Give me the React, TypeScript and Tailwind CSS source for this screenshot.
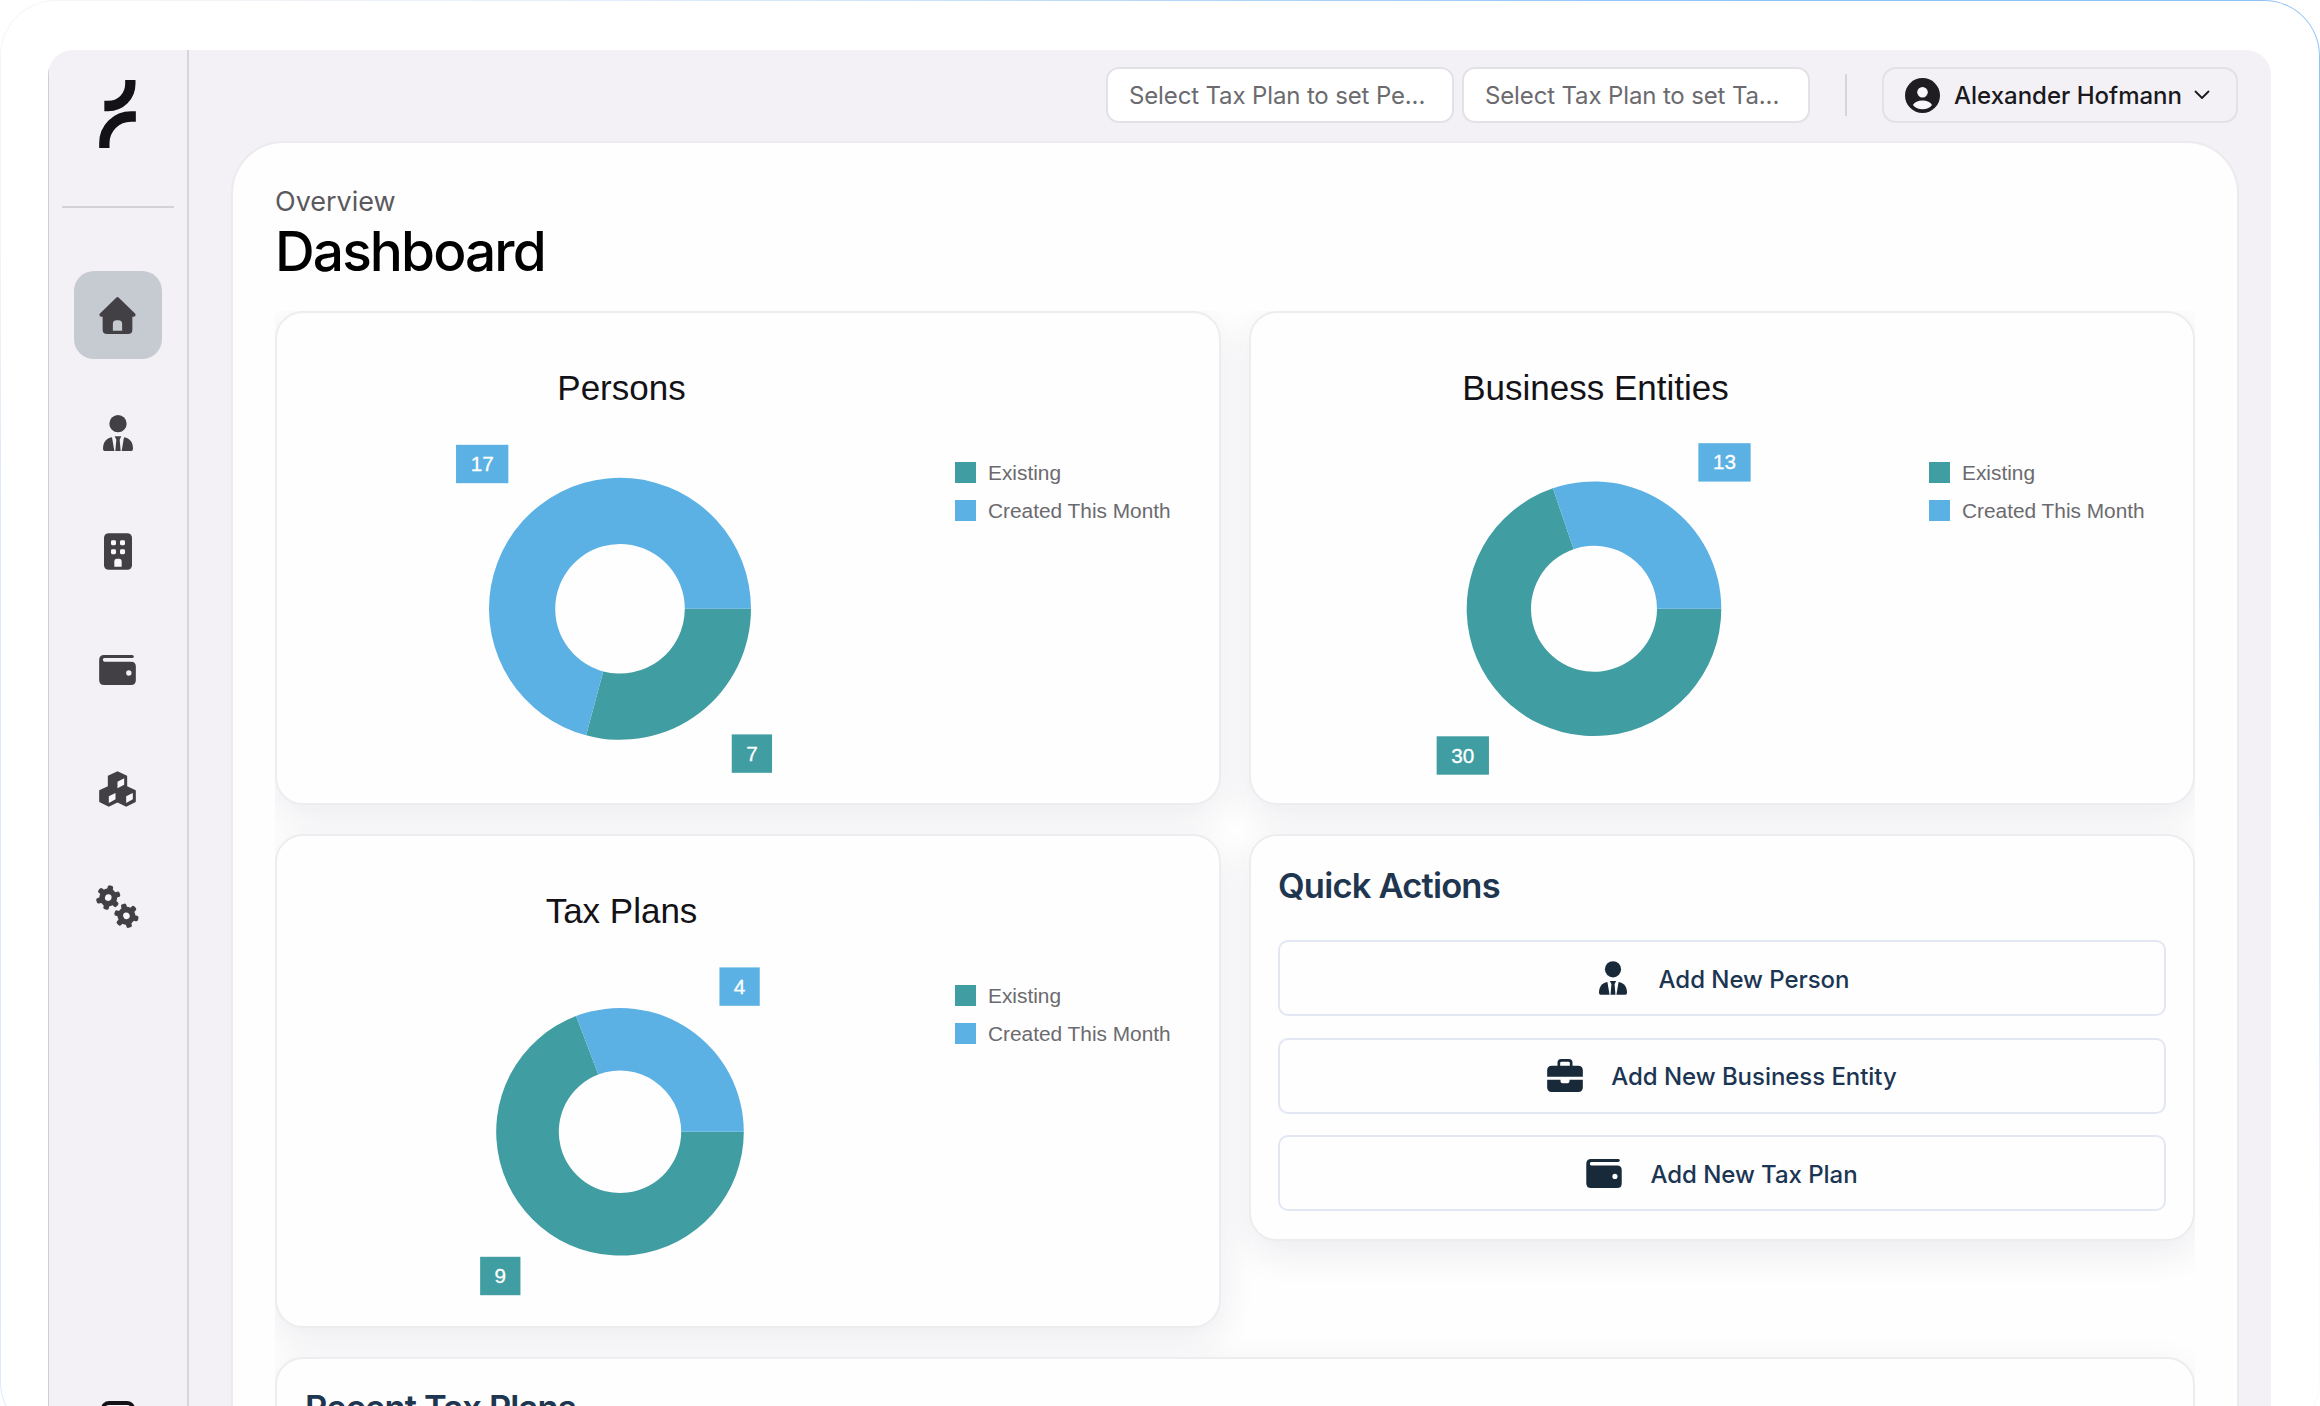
import type { ReactNode } from "react";

const TEAL = "#409da1";
const BLUE = "#5cb1e4";

type IconProps = { className?: string };

interface Slice {
  value: number;
  color: string;
  badge: [number, number];
}

interface ChartData {
  title: string;
  radius: number;
  inner: number;
  slices: Slice[];
}

const charts: ChartData[] = [
  {
    title: "Persons",
    radius: 131,
    inner: 64.8,
    slices: [
      { value: 7, color: TEAL, badge: [474.9, 440.6] },
      { value: 17, color: BLUE, badge: [205.2, 151] },
    ],
  },
  {
    title: "Business Entities",
    radius: 127.3,
    inner: 63,
    slices: [
      { value: 30, color: TEAL, badge: [211.8, 442.5] },
      { value: 13, color: BLUE, badge: [473.5, 149.4] },
    ],
  },
  {
    title: "Tax Plans",
    radius: 123.8,
    inner: 61.2,
    slices: [
      { value: 9, color: TEAL, badge: [223.3, 440] },
      { value: 4, color: BLUE, badge: [462.6, 150.6] },
    ],
  },
];

function Logo() {
  return (
    <svg viewBox="0 0 110 204" className="h-[68px] w-[37px]" fill="none" stroke="#131217" strokeWidth="31">
      <path d="M93.500 0v11c0 38-29 67-67 67H15.500" />
      <path d="M110 109.500H96c-45 0-80.500 35-80.500 80V204" />
    </svg>
  );
}

function HomeIcon({ className }: IconProps) {
  return (
    <svg viewBox="0 0 110 112" className={className} fill="currentColor">
      <path
        fillRule="evenodd"
        d="M51 2q4-3.500 8 0l49 48q3 4 1 7-2 3-6 3h-3v39q0 13-13 13H23q-13 0-13-13V60H7q-4 0-6-3-2-3 1-7zM41 102h28V81q0-11-11-11h-6q-11 0-11 11z"
      />
    </svg>
  );
}

function PersonIcon({ className }: IconProps) {
  return (
    <svg viewBox="0 0 90 108" className={className} fill="currentColor">
      <circle cx="45" cy="26" r="26" />
      <path d="M27 67 34 108H5q-5 0-5-7C0 83 9 70 27 67z" />
      <path d="M63 67 56 108h29q5 0 5-7C90 83 81 70 63 67z" />
      <path d="M35 64h20l-5 10 3 34H37l3-34z" />
    </svg>
  );
}

function BuildingIcon({ className }: IconProps) {
  return (
    <svg viewBox="0 0 84 110" className={className}>
      <rect width="84" height="110" rx="14" fill="currentColor" />
      <g fill="#f8f7fa">
        <rect x="21" y="21" width="15" height="15" rx="4" />
        <rect x="48" y="21" width="15" height="15" rx="4" />
        <rect x="21" y="48" width="15" height="15" rx="4" />
        <rect x="48" y="48" width="15" height="15" rx="4" />
        <path d="M31 101V85q0-8 8-8h6q8 0 8 8v16z" />
      </g>
    </svg>
  );
}

function WalletIcon({ className }: IconProps) {
  return (
    <svg viewBox="0 0 110 90" className={className} fill="currentColor">
      <path
        fillRule="evenodd"
        d="M15 0h84q5 0 5 4.500T99 9H16q-5 0-5 5.500T16 20h80q14 0 14 14v42q0 14-14 14H15Q0 90 0 75V15Q0 0 15 0zM89 46a8 8 0 1 0 0 16 8 8 0 0 0 0-16z"
      />
    </svg>
  );
}

function Cube({ x, y }: { x: number; y: number }) {
  return (
    <g transform={`translate(${x} ${y})`}>
      <path
        d="M0-28 26-16V15L0 28-26 15V-16z"
        fill="currentColor"
        stroke="currentColor"
        strokeWidth="6"
        strokeLinejoin="round"
      />
      <path d="M0 0 20-10V9L0 20z" fill="#f8f7fa" />
    </g>
  );
}

function CubesIcon({ className }: IconProps) {
  return (
    <svg viewBox="0 0 110 108" className={className}>
      <Cube x={55} y={32} />
      <Cube x={29} y={76} />
      <Cube x={81} y={76} />
    </svg>
  );
}

function Gear({ x, y, turn }: { x: number; y: number; turn: number }) {
  return (
    <g transform={`translate(${x} ${y}) rotate(${turn})`}>
      {[0, 60, 120].map((a) => (
        <rect key={a} x="-8.500" y="-37" width="17" height="74" rx="6" transform={`rotate(${a})`} fill="currentColor" />
      ))}
      <circle r="27" fill="currentColor" />
      <circle r="10" fill="#f8f7fa" />
    </g>
  );
}

function GearsIcon({ className }: IconProps) {
  return (
    <svg viewBox="0 0 130 130" className={className}>
      <Gear x={37} y={38} turn={12} />
      <Gear x={92} y={93} turn={-15} />
    </svg>
  );
}

function BriefcaseIcon({ className }: IconProps) {
  return (
    <svg viewBox="0 0 107 99" className={className} fill="currentColor">
      <path
        fillRule="evenodd"
        d="M31 20V11Q31 0 42 0h23q11 0 11 11v9h17q14 0 14 14v19H0V34q0-14 14-14zM39 20h29v-8q0-4-4-4H43q-4 0-4 4z"
      />
      <path d="M0 62h40v5q0 6 6 6h15q6 0 6-6v-5h40v23q0 14-14 14H14Q0 99 0 85z" />
    </svg>
  );
}

function AvatarIcon() {
  return (
    <svg viewBox="0 0 106 106" className="size-[35px]">
      <circle cx="53" cy="53" r="53" fill="#1f1d22" />
      <circle cx="53" cy="43" r="16" fill="#f8f7fa" />
      <path d="M24 82q8-14 29-14t29 14q-11 13-29 13T24 82z" fill="#f8f7fa" />
    </svg>
  );
}

const navIcons = [
  <HomeIcon className="h-[37px] w-[37px]" />,
  <PersonIcon className="h-[36px] w-[30px]" />,
  <BuildingIcon className="h-[37px] w-[28px]" />,
  <WalletIcon className="h-[30px] w-[37px]" />,
  <CubesIcon className="h-[36px] w-[37px]" />,
  <GearsIcon className="h-[43px] w-[43px]" />,
];

const actions = [
  { label: "Add New Person", icon: <PersonIcon className="h-[34px] w-[28px]" /> },
  { label: "Add New Business Entity", icon: <BriefcaseIcon className="h-[33px] w-[36px]" /> },
  { label: "Add New Tax Plan", icon: <WalletIcon className="h-[29px] w-[36px]" /> },
];

function Sidebar() {
  return (
    <aside className="flex w-[141px] shrink-0 flex-col items-center border-r-2 border-l border-r-[#d6d5d9] border-l-[#cfced3] pr-px">
      <div className="mt-[30px] shrink-0">
        <Logo />
      </div>
      <div className="mt-[58px] h-[2px] w-[112px] shrink-0 bg-[#d3d2d6]" />
      <nav className="mt-[63px] flex shrink-0 flex-col gap-[30.400px] text-[#424045]">
        {navIcons.map((icon, i) => (
          <button
            key={i}
            className={`flex size-[88px] shrink-0 items-center justify-center rounded-[20px] ${i === 0 ? "bg-[#c6cbd1]" : ""}`}
          >
            {icon}
          </button>
        ))}
      </nav>
      <div className="mt-[450px] h-[40px] w-[34px] shrink-0 rounded-[8px] border-4 border-[#131217]" />
    </aside>
  );
}

function Select({ children }: { children: ReactNode }) {
  return (
    <div className="flex h-[56px] w-[348px] items-center rounded-[13px] border-2 border-[#e2e1e5] bg-white pt-[2px] pl-[21px] text-[24px] tracking-[-0.140px] whitespace-nowrap text-[#6b6a6e]">
      {children}
    </div>
  );
}

function TopBar() {
  return (
    <header className="flex h-[91px] items-start justify-end pt-[17px] pr-[33px]">
      <Select>Select Tax Plan to set Pe...</Select>
      <div className="w-[8px]" />
      <Select>Select Tax Plan to set Ta...</Select>
      <div className="mt-[7px] mr-[35px] ml-[35px] h-[42px] w-[2px] bg-[#d6d5d9]" />
      <button className="flex h-[56px] w-[356px] items-center rounded-[14px] border-2 border-[#e2e1e5] pl-[21px]">
        <AvatarIcon />
        <span className="ml-[14px] pt-[2px] text-[24px] font-medium whitespace-nowrap text-[#1a191d]">
          Alexander Hofmann
        </span>
        <svg viewBox="0 0 16 10" className="ml-[12px] h-[10px] w-[16px]" fill="none" stroke="#1a191d" strokeWidth="1.800">
          <path d="M1.500 1.500 8 8l6.500-6.500" strokeLinecap="round" strokeLinejoin="round" />
        </svg>
      </button>
    </header>
  );
}

function ringPath(from: number, to: number, r: number, inner: number) {
  const at = (angle: number, dist: number) =>
    `${(Math.cos(angle) * dist).toFixed(2)} ${(Math.sin(angle) * dist).toFixed(2)}`;
  const large = to - from > Math.PI ? 1 : 0;
  return `M${at(from, r)}A${r} ${r} 0 ${large} 1 ${at(to, r)}L${at(to, inner)}A${inner} ${inner} 0 ${large} 0 ${at(from, inner)}z`;
}

function Donut({ title, radius, inner, slices }: ChartData) {
  const total = slices.reduce((sum, s) => sum + s.value, 0);
  let angle = 0;

  return (
    <svg width="678" height="489" className="shrink-0 font-['Liberation_Sans',Arial,sans-serif]">
      <text x="344.500" y="86.500" textAnchor="middle" fontSize="35" fill="#131217">
        {title}
      </text>
      <g transform="translate(343 295.800)">
        {slices.map((s) => {
          const from = angle;
          angle += (s.value / total) * Math.PI * 2;
          return <path key={s.value} d={ringPath(from, angle, radius, inner)} fill={s.color} />;
        })}
      </g>
      {slices.map((s) => {
        const w = s.value > 9 ? 52.3 : 40.3;
        const [x, y] = s.badge;
        return (
          <g key={s.value} transform={`translate(${x} ${y})`}>
            <rect x={-w / 2} y="-19.200" width={w} height="38.400" fill={s.color} />
            <text y="7" textAnchor="middle" fontSize="20.700" fill="#fff" stroke="#fff" strokeWidth="0.300">
              {s.value}
            </text>
          </g>
        );
      })}
    </svg>
  );
}

function Card({ className = "", children }: { className?: string; children: ReactNode }) {
  return (
    <section
      className={`rounded-[28px] border-2 border-[#ededf0] bg-[#fefefe] shadow-[0_12px_36px_rgba(60,30,80,0.09)] ${className}`}
    >
      {children}
    </section>
  );
}

function ChartCard({ chart }: { chart: ChartData }) {
  return (
    <Card className="flex h-[494px]">
      <Donut {...chart} />
      <ul className="mt-[149px] flex flex-col gap-[16.500px] font-['Liberation_Sans',Arial,sans-serif] text-[20.850px] leading-[21.500px] text-[#6b6a6e]">
        <li className="flex items-center gap-[12px] whitespace-nowrap">
          <span className="size-[21px] bg-[#409da1]" />
          Existing
        </li>
        <li className="flex items-center gap-[12px] whitespace-nowrap">
          <span className="size-[21px] bg-[#5cb1e4]" />
          Created This Month
        </li>
      </ul>
    </Card>
  );
}

function QuickActions() {
  return (
    <Card className="h-[407px] self-start px-[27px] pt-[26px]">
      <h2 className="text-[34.500px] leading-[47px] font-semibold tracking-[-0.800px] text-[#1e3650]">Quick Actions</h2>
      <div className="mt-[31px] flex flex-col gap-[21.500px]">
        {actions.map((a) => (
          <button
            key={a.label}
            className="flex h-[76px] items-center justify-center gap-[28px] rounded-[10px] border-2 border-[#e3e7f4] text-[24px] font-medium tracking-[-0.050px] text-[#1b3553]"
          >
            <span className="flex w-[36px] justify-center text-[#182a39]">{a.icon}</span>
            <span className="pt-[3px]">{a.label}</span>
          </button>
        ))}
      </div>
    </Card>
  );
}

export default function App() {
  return (
    <div className="h-[1406px] w-[2320px] overflow-hidden bg-white font-['Inter',sans-serif]">
      <div className="h-[1438px] rounded-[56px] bg-[conic-gradient(#b5d8f8_0deg,#90c4f8_40deg,#90c4f8_80deg,#fafafe_115deg,#fafafe_200deg,#dbe8fd_245deg,#dbe8fd_280deg,#f4f4f6_292deg,#f4f4f6_305deg,#e4effc_320deg,#b5d8f8_360deg)] p-px">
        <div className="h-full rounded-[55px] bg-white pt-[49px] pr-[48px] pl-[47px]">
          <div className="flex h-[1387px] overflow-hidden rounded-t-[25px] bg-[#f3f1f5]">
            <Sidebar />
            <div className="min-w-0 flex-1">
              <TopBar />
              <main className="ml-[42px] h-[1296px] w-[2008px] rounded-t-[52px] border-2 border-b-0 border-[#eceaee] bg-[#fefefe] px-[42px] pt-[41px]">
                <p className="text-[27px] leading-[35px] text-[#5a595d]">Overview</p>
                <h1 className="text-[55px] leading-[65px] font-medium tracking-[-1.900px] text-black">Dashboard</h1>
                <div className="mt-[27px] grid h-[1119px] grid-cols-2 content-start gap-x-[28px] gap-y-[29px] overflow-hidden">
                  <ChartCard chart={charts[0]} />
                  <ChartCard chart={charts[1]} />
                  <ChartCard chart={charts[2]} />
                  <QuickActions />
                  <Card className="col-span-2 h-[300px] px-[28px] pt-[26px]">
                    <h2 className="text-[34.500px] leading-[46px] font-semibold tracking-[-0.850px] text-[#1e3650]">
                      Recent Tax Plans
                    </h2>
                  </Card>
                </div>
              </main>
            </div>
          </div>
        </div>
      </div>
    </div>
  );
}
